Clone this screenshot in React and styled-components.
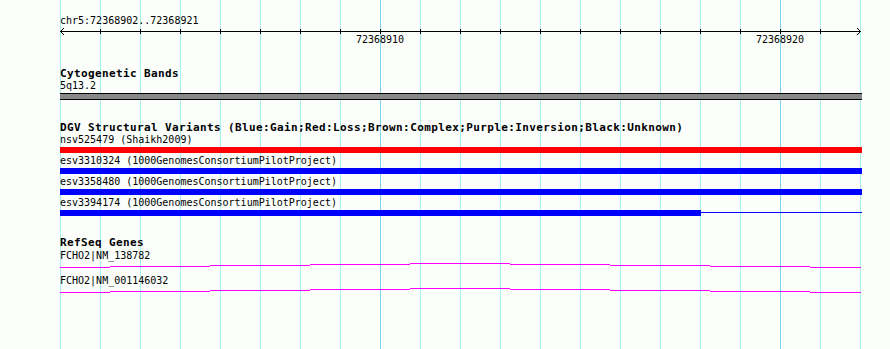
import React from "react";
import styled, { createGlobalStyle } from "styled-components";

const GlobalStyle = createGlobalStyle`
  html, body {
    margin: 0;
    padding: 0;
    background: #fbfefb;
  }
`;

const GRID = "#a6eef0";
const GRID_MAJOR = "#80d2ef";

const Browser = styled.div`
  width: 890px;
  height: 349px;
  box-sizing: border-box;
  padding-left: 60px;
  overflow: hidden;
  color: #000;
  font-family: "DejaVu Sans Mono", "Liberation Mono", monospace;
  font-size: 10px;
  line-height: 12px;
  background-color: #fbfefb;
  background-image:
    linear-gradient(
      to right,
      transparent 380px,
      ${GRID_MAJOR} 380px,
      ${GRID_MAJOR} 381px,
      transparent 381px,
      transparent 780px,
      ${GRID_MAJOR} 780px,
      ${GRID_MAJOR} 781px,
      transparent 781px
    ),
    repeating-linear-gradient(to right, ${GRID} 0 1px, transparent 1px 40px);
  background-position: 0 0, 60px 0;
  background-size: 100% 100%, 801px 100%;
  background-repeat: no-repeat;
`;

const Label = styled.div`
  height: 12px;
  margin-top: ${(p) => p.$top || 0}px;
  white-space: nowrap;
`;

const TrackTitle = styled.div`
  height: 12px;
  margin-top: ${(p) => p.$top || 0}px;
  font-size: 11px;
  font-weight: bold;
  letter-spacing: 0.38px;
  white-space: nowrap;
`;

const Axis = styled.svg`
  display: block;
  width: 802px;
  height: 7px;
  overflow: visible;
  shape-rendering: crispEdges;
`;

const TickLabels = styled.div`
  display: grid;
  grid-template-columns: repeat(20, 40px);
  height: 12px;
`;

const TickLabel = styled.div`
  grid-column: ${(p) => p.$span};
  text-align: center;
`;

const BandBar = styled.div`
  box-sizing: border-box;
  width: 802px;
  height: 7px;
  margin-top: 1px;
  border-top: 1px solid #000;
  border-bottom: 1px solid #000;
  background: #888;
`;

const Feature = styled.div`
  padding-bottom: 2px;
`;

const FeatureLine = styled.div`
  display: flex;
  align-items: flex-start;
  margin-top: 1px;
`;

const Block = styled.div`
  width: ${(p) => p.$width}px;
  height: 6px;
  background: ${(p) => p.$color};
`;

const Intron = styled.div`
  width: ${(p) => p.$width}px;
  height: 1px;
  margin-top: 2px;
  background: ${(p) => p.$color};
`;

const GeneTrace = styled.svg`
  display: block;
  width: 802px;
  height: 6px;
  shape-rendering: crispEdges;
`;

const ticks = Array.from({ length: 19 }, (_, i) => 40 + i * 40);

const Ruler = () => (
  <>
    <Label $top={15}>chr5:72368902..72368921</Label>
    <Axis viewBox="0 0 802 7">
      <line x1="0" y1="4.5" x2="801" y2="4.5" stroke="#000" />
      {ticks.map((x) => (
        <line key={x} x1={x + 0.5} y1="2" x2={x + 0.5} y2="7" stroke="#000" />
      ))}
      <polyline points="4,1 0.5,4.5 4,8" fill="none" stroke="#000" />
      <polyline points="797,1 800.5,4.5 797,8" fill="none" stroke="#000" />
    </Axis>
    <TickLabels>
      <TickLabel $span="8 / 10">72368910</TickLabel>
      <TickLabel $span="18 / 20">72368920</TickLabel>
    </TickLabels>
  </>
);

const variants = [
  { name: "nsv525479 (Shaikh2009)", color: "#ff0000", thick: 802 },
  { name: "esv3310324 (1000GenomesConsortiumPilotProject)", color: "#0000ff", thick: 802 },
  { name: "esv3358480 (1000GenomesConsortiumPilotProject)", color: "#0000ff", thick: 802 },
  { name: "esv3394174 (1000GenomesConsortiumPilotProject)", color: "#0000ff", thick: 641 },
];

// exon steps: [start, end, row] relative to the data area
const steps = [
  [0, 50, 5],
  [50, 150, 4],
  [150, 250, 3],
  [250, 350, 2],
  [350, 450, 1],
  [450, 550, 2],
  [550, 650, 3],
  [650, 750, 4],
  [750, 801, 5],
];

const Gene = ({ name, top }) => (
  <>
    <Label $top={top}>{name}</Label>
    <GeneTrace viewBox="0 0 802 6">
      {steps.map(([a, b, y]) => (
        <rect key={a} x={a} y={y} width={b - a} height="1" fill="#ff00ff" />
      ))}
    </GeneTrace>
  </>
);

export default function App() {
  return (
    <>
      <GlobalStyle />
      <Browser>
        <Ruler />

        <TrackTitle $top={22}>Cytogenetic Bands</TrackTitle>
        <Label>5q13.2</Label>
        <BandBar />

        <TrackTitle $top={22}>
          DGV Structural Variants (Blue:Gain;Red:Loss;Brown:Complex;Purple:Inversion;Black:Unknown)
        </TrackTitle>
        {variants.map((v) => (
          <Feature key={v.name}>
            <Label>{v.name}</Label>
            <FeatureLine>
              <Block $width={v.thick} $color={v.color} />
              {v.thick < 802 && <Intron $width={802 - v.thick} $color={v.color} />}
            </FeatureLine>
          </Feature>
        ))}

        <TrackTitle $top={19}>RefSeq Genes</TrackTitle>
        <Gene name="FCHO2|NM_138782" top={1} />
        <Gene name="FCHO2|NM_001146032" top={7} />
      </Browser>
    </>
  );
}
